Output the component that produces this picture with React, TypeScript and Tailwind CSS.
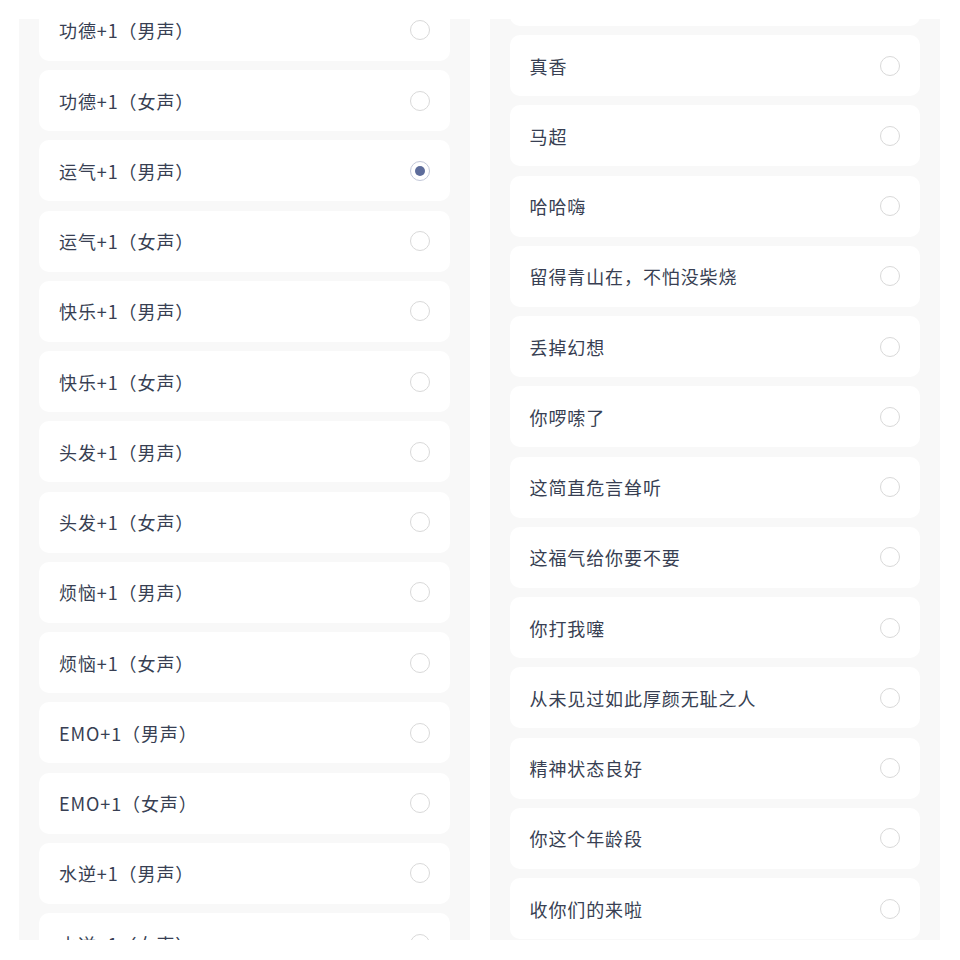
import { useState } from "react";

const LEFT_ITEMS = [
  "功德+1（男声）",
  "功德+1（女声）",
  "运气+1（男声）",
  "运气+1（女声）",
  "快乐+1（男声）",
  "快乐+1（女声）",
  "头发+1（男声）",
  "头发+1（女声）",
  "烦恼+1（男声）",
  "烦恼+1（女声）",
  "EMO+1（男声）",
  "EMO+1（女声）",
  "水逆+1（男声）",
  "水逆+1（女声）",
];

const RIGHT_ITEMS = [
  "我太难了",
  "真香",
  "马超",
  "哈哈嗨",
  "留得青山在，不怕没柴烧",
  "丢掉幻想",
  "你啰嗦了",
  "这简直危言耸听",
  "这福气给你要不要",
  "你打我噻",
  "从未见过如此厚颜无耻之人",
  "精神状态良好",
  "你这个年龄段",
  "收你们的来啦",
];

function Radio({ checked }: { checked: boolean }) {
  return (
    <span
      className={
        checked
          ? "flex h-5 w-5 shrink-0 items-center justify-center rounded-full border border-[#c3c8d9] bg-white"
          : "flex h-5 w-5 shrink-0 items-center justify-center rounded-full border border-[#d9d9d9] bg-white"
      }
    >
      {checked ? <span className="h-2.5 w-2.5 rounded-full bg-[#5d6c9b]" /> : null}
    </span>
  );
}

function SoundList({
  items,
  selected,
  onSelect,
  offsetClass,
}: {
  items: string[];
  selected: string;
  onSelect: (value: string) => void;
  offsetClass: string;
}) {
  return (
    <div className="h-[921px] flex-1 overflow-hidden bg-[#f8f8f8] px-5">
      <div className={`flex flex-col gap-[9.25px] ${offsetClass}`}>
        {items.map((item) => (
          <button
            key={item}
            type="button"
            onClick={() => onSelect(item)}
            className="flex h-[61px] w-full shrink-0 items-center justify-between rounded-[10px] bg-white px-5 text-left"
          >
            <span className="text-[18px] leading-none tracking-[0.9px] text-[#383f53]">
              {item}
            </span>
            <Radio checked={selected === item} />
          </button>
        ))}
      </div>
    </div>
  );
}

export default function App() {
  const [selected, setSelected] = useState("运气+1（男声）");

  return (
    <div
      className="flex min-h-[960px] w-[960px] gap-5 bg-white pl-[19px] pr-5 pt-[19px]"
      style={{ fontFamily: '"Noto Sans CJK SC", "Noto Sans", sans-serif' }}
    >
      <SoundList
        items={LEFT_ITEMS}
        selected={selected}
        onSelect={setSelected}
        offsetClass="mt-[-19.25px]"
      />
      <SoundList
        items={RIGHT_ITEMS}
        selected={selected}
        onSelect={setSelected}
        offsetClass="mt-[-54.25px]"
      />
    </div>
  );
}
